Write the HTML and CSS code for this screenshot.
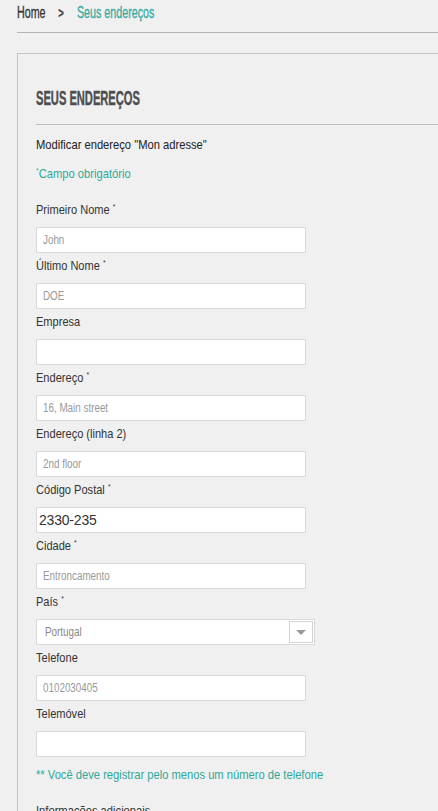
FILE: index.html
```html
<!DOCTYPE html>
<html lang="pt">
<head>
<meta charset="utf-8">
<title>Seus endereços</title>
<link rel="stylesheet" href="styles.css">
</head>
<body>
<nav class="breadcrumb">
  <div class="crumbs">
    <a class="crumb-home" href="#">Home</a>
    <span class="crumb-sep">&gt;</span>
    <span class="crumb-current">Seus endereços</span>
  </div>
</nav>
<section class="panel">
  <h1 class="panel-title"><span>SEUS ENDEREÇOS</span></h1>
  <p class="intro narrow">Modificar endereço "Mon adresse"</p>
  <p class="required-note narrow"><sup>*</sup>Campo obrigatório</p>
  <form class="address-form">
    <div class="field">
      <label class="label">Primeiro Nome <sup>*</sup></label>
      <div class="input placeholder"><span>John</span></div>
    </div>
    <div class="field">
      <label class="label">Último Nome <sup>*</sup></label>
      <div class="input placeholder"><span>DOE</span></div>
    </div>
    <div class="field">
      <label class="label">Empresa</label>
      <div class="input"></div>
    </div>
    <div class="field">
      <label class="label">Endereço <sup>*</sup></label>
      <div class="input placeholder"><span>16, Main street</span></div>
    </div>
    <div class="field">
      <label class="label">Endereço (linha 2)</label>
      <div class="input placeholder"><span>2nd floor</span></div>
    </div>
    <div class="field">
      <label class="label">Código Postal <sup>*</sup></label>
      <div class="input value">2330-235</div>
    </div>
    <div class="field">
      <label class="label">Cidade <sup>*</sup></label>
      <div class="input placeholder"><span>Entroncamento</span></div>
    </div>
    <div class="field">
      <label class="label">País <sup>*</sup></label>
      <div class="select">
        <span class="select-text">Portugal</span>
        <span class="select-btn"><span class="caret"></span></span>
      </div>
    </div>
    <div class="field">
      <label class="label">Telefone</label>
      <div class="input placeholder"><span>0102030405</span></div>
    </div>
    <div class="field">
      <label class="label">Telemóvel</label>
      <div class="input"></div>
    </div>
    <p class="phone-note narrow">** Você deve registrar pelo menos um número de telefone</p>
    <p class="extra-label narrow">Informações adicionais</p>
  </form>
</section>
</body>
</html>
```
FILE: styles.css
```css
html, body {
  margin: 0;
  padding: 0;
  background: #f0f0f0;
  overflow: hidden;
}
body {
  padding-left: 17px;
  font-family: "Liberation Sans", Arial, sans-serif;
  color: #333;
}
.breadcrumb {
  height: 32px;
  border-bottom: 1px solid #b5b5b5;
  box-sizing: content-box;
}
.crumbs {
  display: flex;
  align-items: center;
  padding-top: 3px;
  font-size: 17px;
  line-height: 20px;
  transform: scaleX(0.63);
  transform-origin: left center;
  -webkit-text-stroke: 0.3px currentColor;
}
.crumb-home {
  color: #333;
  text-decoration: none;
}
.crumb-sep {
  margin-left: 20px;
  margin-right: 21px;
  font-weight: bold;
  color: #444;
  font-size: 15px;
}
.crumb-current {
  color: #33aba3;
}
.panel {
  margin-top: 20px;
  border-top: 1px solid #c4c4c4;
  border-left: 1px solid #c4c4c4;
  padding: 32px 0 0 18px;
}
.panel-title {
  margin: 0;
  height: 38px;
  border-bottom: 1px solid #bdbdbd;
  font-size: 21px;
  line-height: 24px;
  font-weight: bold;
  color: #4d4d4d;
}
.panel-title span {
  display: inline-block;
  transform: scaleX(0.53);
  transform-origin: left center;
  -webkit-text-stroke: 0.4px #4d4d4d;
}
.narrow {
  transform: scaleX(0.86);
  transform-origin: left center;
}
.intro {
  margin: 12px 0 0;
  font-size: 13px;
  line-height: 16px;
  color: #222;
}
.required-note {
  margin: 13px 0 0;
  font-size: 13px;
  line-height: 16px;
  color: #2ea89b;
}
sup {
  font-size: 8px;
  line-height: 0;
  vertical-align: 5px;
}
.address-form {
  margin-top: 15px;
  display: flex;
  flex-direction: column;
}
.field {
  display: flex;
  flex-direction: column;
}
.label {
  box-sizing: border-box;
  height: 30px;
  padding-top: 5px;
  font-size: 13px;
  line-height: 16px;
  color: #333;
  transform: scaleX(0.85);
  transform-origin: left center;
}
.input {
  box-sizing: border-box;
  width: 270px;
  height: 26px;
  background: #fff;
  border: 1px solid #d9d9d9;
  padding: 0 6px;
  font-size: 12px;
  line-height: 24px;
}
.input span {
  display: inline-block;
  transform: scaleX(0.82);
  transform-origin: left center;
}
.placeholder {
  color: #999;
}
.value {
  padding-left: 2px;
  font-size: 14px;
  letter-spacing: -0.2px;
  color: #333;
}
.select {
  box-sizing: border-box;
  width: 279px;
  height: 26px;
  background: #fff;
  border: 1px solid #d9d9d9;
  display: flex;
  align-items: center;
  justify-content: space-between;
  padding: 0 1px 0 8px;
}
.select-text {
  display: inline-block;
  font-size: 12px;
  color: #888;
  transform: scaleX(0.82);
  transform-origin: left center;
}
.select-btn {
  box-sizing: border-box;
  width: 24px;
  height: 22px;
  border: 1px solid #d4d4d4;
  display: flex;
  align-items: center;
  justify-content: center;
}
.caret {
  width: 0;
  height: 0;
  border-left: 5px solid transparent;
  border-right: 5px solid transparent;
  border-top: 5px solid #9a9a9a;
}
.phone-note {
  margin: 10px 0 0;
  font-size: 13px;
  line-height: 16px;
  color: #2ea89b;
}
.extra-label {
  margin: 20px 0 0;
  font-size: 13px;
  line-height: 16px;
  color: #333;
}
```
